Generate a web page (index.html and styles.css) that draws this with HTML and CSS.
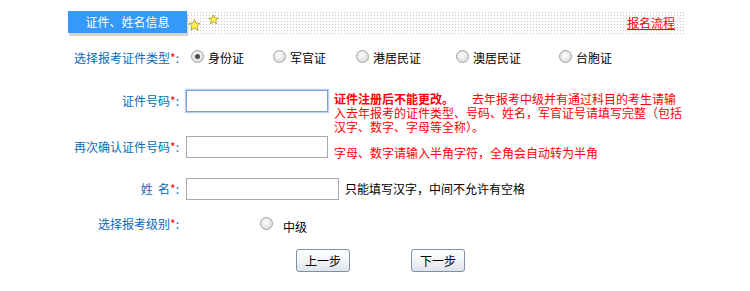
FILE: index.html
```html
<!DOCTYPE html>
<html lang="zh-CN">
<head>
<meta charset="utf-8">
<title>证件、姓名信息</title>
<link rel="stylesheet" href="styles.css">
</head>
<body>
<div class="page">
  <div class="header">
    <div class="title">证件、姓名信息</div>
    <div class="dots">
      <svg class="star star1" width="13" height="12" viewBox="0 0 13 12"><polygon points="6.5,0.6 8.1,4.2 12.2,4.4 9.1,7.1 10.1,11.2 6.5,9 2.9,11.2 3.9,7.1 0.8,4.4 4.9,4.2" fill="#fff44f" stroke="#a89a2c" stroke-width="0.9" stroke-linejoin="round"/></svg>
      <svg class="star star2" width="11" height="11" viewBox="0 0 13 12"><polygon points="6.5,0.6 8.1,4.2 12.2,4.4 9.1,7.1 10.1,11.2 6.5,9 2.9,11.2 3.9,7.1 0.8,4.4 4.9,4.2" fill="#fff44f" stroke="#a89a2c" stroke-width="1" stroke-linejoin="round"/></svg>
      <a class="flow" href="#">报名流程</a>
    </div>
  </div>

  <div class="form">
    <div class="row row-type">
      <div class="label">选择报考证件类型<span class="req">*</span>:</div>
      <div class="options">
        <span class="opt"><span class="radio checked"></span>身份证</span>
        <span class="opt"><span class="radio"></span>军官证</span>
        <span class="opt"><span class="radio"></span>港居民证</span>
        <span class="opt"><span class="radio"></span>澳居民证</span>
        <span class="opt"><span class="radio"></span>台胞证</span>
      </div>
    </div>

    <div class="row row-id">
      <div class="label">证件号码<span class="req">*</span>:</div>
      <div class="field">
        <input class="text focus" type="text">
        <div class="note note-id"><b class="strong">证件注册后不能更改。</b>去年报考中级并有通过科目的考生请输入去年报考的证件类型、号码、姓名，军官证号请填写完整（包括汉字、数字、字母等全称）。</div>
      </div>
    </div>

    <div class="row row-confirm">
      <div class="label">再次确认证件号码<span class="req">*</span>:</div>
      <div class="field">
        <input class="text" type="text">
        <div class="note note-confirm">字母、数字请输入半角字符，全角会自动转为半角</div>
      </div>
    </div>

    <div class="row row-name">
      <div class="label">姓&nbsp;&nbsp;名<span class="req">*</span>:</div>
      <div class="field">
        <input class="text wide" type="text">
        <div class="hint">只能填写汉字，中间不允许有空格</div>
      </div>
    </div>

    <div class="row row-level">
      <div class="label">选择报考级别<span class="req">*</span>:</div>
      <div class="level">
        <span class="radio"></span><span class="level-text">中级</span>
      </div>
    </div>

    <div class="buttons">
      <button class="btn" type="button">上一步</button>
      <button class="btn" type="button">下一步</button>
    </div>
  </div>
</div>
</body>
</html>
```

FILE: styles.css
```css
* { box-sizing: border-box; }

html, body {
  margin: 0;
  padding: 0;
  background: #fff;
}

body {
  font-family: "Noto Sans CJK SC", "Noto Sans", sans-serif;
  font-size: 12px;
  color: #000;
}

.page {
  width: 750px;
  height: 291px;
  padding-top: 11px;
  overflow: hidden;
}

/* header */
.header {
  display: flex;
  margin-left: 68px;
  width: 618px;
  height: 22px;
}

.title {
  width: 119px;
  height: 22px;
  background: #3399fa;
  color: #fff;
  font-size: 12px;
  line-height: 22px;
  text-align: center;
  box-shadow: 1px 3px 0 #d3d3d3;
  flex-shrink: 0;
}

.dots {
  flex: 1;
  position: relative;
  height: 23px;
  background-image: radial-gradient(circle, #c8c8c8 0.7px, transparent 0.9px);
  background-size: 3px 3px;
  background-position: 0 0;
  display: flex;
  justify-content: flex-end;
  align-items: center;
  padding-right: 11px;
}

.star {
  position: absolute;
}
.star1 { left: 1px; top: 8px; }
.star2 { left: 21px; top: 3px; }

.flow {
  color: #ff0000;
  text-decoration: underline;
  font-size: 12px;
  line-height: 14px;
  margin-top: 1px;
}

/* form */
.form {
  margin-top: 12px;
}

.row {
  display: grid;
  grid-template-columns: 179px 1fr;
  column-gap: 7px;
  align-items: start;
}

.label {
  color: #0a6ab4;
  text-align: right;
  line-height: 22px;
  white-space: nowrap;
}

.req {
  color: #ff0000;
}

.row-type {
  height: 26px;
  align-items: center;
}
.row-type .label { line-height: 26px; }

.options {
  display: grid;
  grid-template-columns: 82px 83px 100px 103px auto;
  padding-left: 5px;
  align-items: center;
}

.opt {
  display: inline-flex;
  align-items: center;
  gap: 4px;
  line-height: 16px;
  white-space: nowrap;
}

.radio {
  display: inline-block;
  width: 13px;
  height: 13px;
  border-radius: 50%;
  border: 1px solid #a3a3a3;
  background: radial-gradient(circle at 45% 40%, #ffffff 0, #ececec 40%, #cfcfcf 100%);
  position: relative;
  flex-shrink: 0;
  margin-top: -3px;
}

.radio.checked::after {
  content: "";
  position: absolute;
  left: 3px;
  top: 3px;
  width: 5px;
  height: 5px;
  border-radius: 50%;
  background: #4a4a4a;
}

.field {
  display: flex;
  align-items: flex-start;
}

.text {
  width: 142px;
  height: 22px;
  margin: 0;
  padding: 0 2px;
  border: 1px solid #a9a9a9;
  background: #fff;
  font: inherit;
  flex-shrink: 0;
}

.text.focus {
  border: 1px solid #7c9fd8;
  box-shadow: 0 0 1px 1px #bcd2f2;
}

.text.wide {
  width: 153px;
}

.note {
  color: #ff0000;
  line-height: 14px;
  margin-left: 6px;
}

.note-id {
  width: 351px;
  padding-top: 2px;
}

.strong {
  font-weight: bold;
  margin-right: 18px;
}

.note-confirm {
  padding-top: 10px;
  white-space: nowrap;
}

.hint {
  margin-left: 6px;
  line-height: 22px;
  white-space: nowrap;
}

.row-id { margin-top: 19px; }
.row-confirm { margin-top: 2px; }
.row-name { margin-top: 18px; }
.row-level { margin-top: 13px; }

.level {
  display: flex;
  align-items: center;
  height: 22px;
  padding-left: 74px;
}

.level .radio {
  margin-top: -2px;
}

.level-text {
  margin-left: 10px;
  margin-top: 5px;
  line-height: 16px;
}

.buttons {
  display: flex;
  margin-top: 14px;
  padding-left: 296px;
  gap: 61px;
}

.btn {
  width: 54px;
  height: 23px;
  margin: 0;
  padding: 0;
  border: 1px solid #7f90a8;
  border-radius: 3px;
  background: linear-gradient(#ffffff 0%, #f4f6f9 45%, #dde3ec 100%);
  font: inherit;
  font-size: 12px;
  color: #000;
  line-height: 20px;
}
```
